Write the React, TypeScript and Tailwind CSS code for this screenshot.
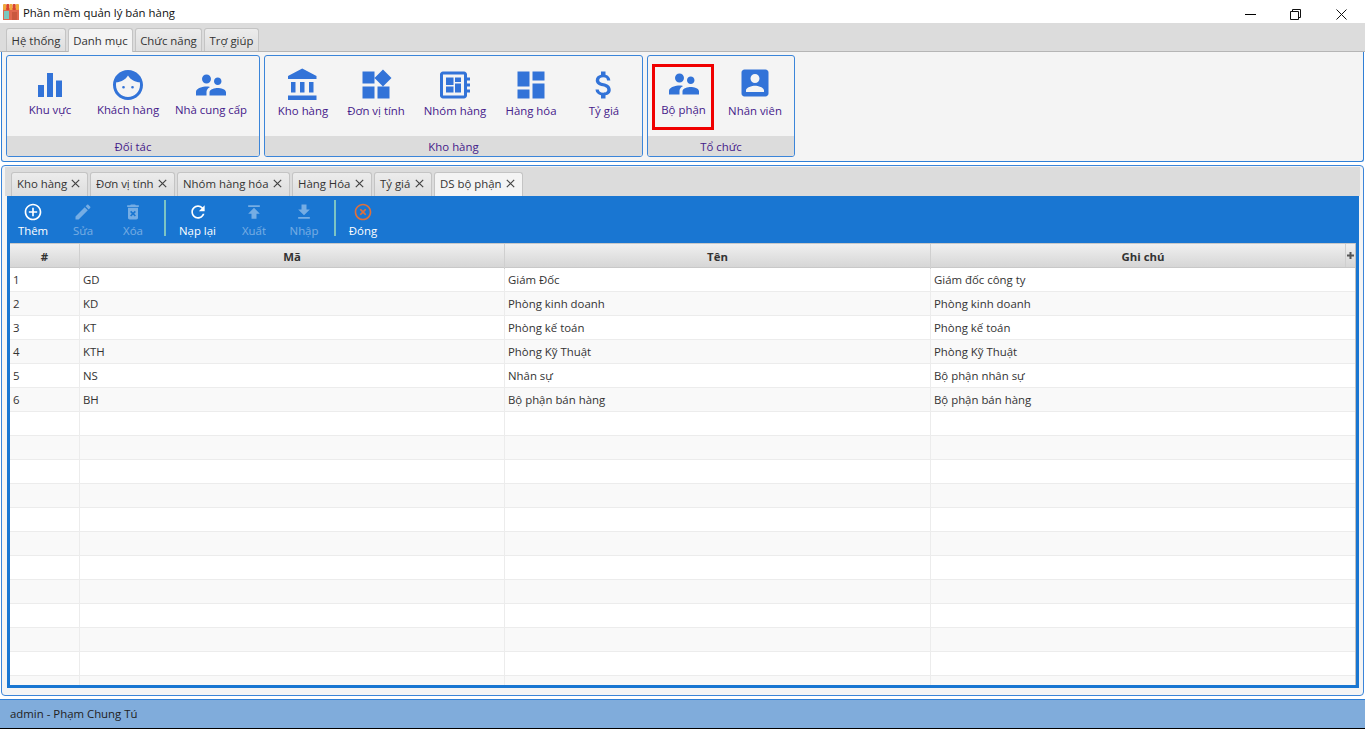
import React from "react";

const P = {
  bars: "M10 20h4V4h-4v16zm-6 0h4v-8H4v8zM16 9v11h4V9h-4z",
  people: "M16.5 12c1.38 0 2.49-1.12 2.49-2.5S17.88 7 16.5 7C15.12 7 14 8.12 14 9.5s1.12 2.5 2.5 2.5zM9 11c1.66 0 2.99-1.34 2.99-3S10.66 5 9 5C7.34 5 6 6.34 6 8s1.34 3 3 3zm7.5 3c-1.83 0-5.5.92-5.5 2.75V19h11v-2.25c0-1.83-3.67-2.75-5.5-2.75zM9 13c-2.33 0-7 1.17-7 3.5V19h7v-2.25c0-.85.33-2.34 2.37-3.47C10.5 13.1 9.66 13 9 13z",
  bank: "M4 10v7h3v-7H4zm6 0v7h3v-7h-3zM2 22h19v-3H2v3zm14-12v7h3v-7h-3zm-4.5-9L2 6v2h19V6l-9.5-5z",
  widgets: "M13 13v8h8v-8h-8zM3 21h8v-8H3v8zM3 3v8h8V3H3zm13.66-1.31L11 7.34 16.66 13l5.66-5.66-5.66-5.65z",
  board: "M22 9V7h-2V5c0-1.1-.9-2-2-2H4c-1.1 0-2 .9-2 2v14c0 1.1.9 2 2 2h14c1.1 0 2-.9 2-2v-2h2v-2h-2v-2h2v-2h-2V9h2zm-4 10H4V5h14v14zM6 13h5v4H6zm6-6h4v3h-4zM6 7h5v5H6zm6 4h4v6h-4z",
  dash: "M3 13h8V3H3v10zm0 8h8v-6H3v6zm10 0h8V11h-8v10zm0-18v6h8V3h-8z",
  money: "M11.8 10.9c-2.27-.59-3-1.2-3-2.15 0-1.09 1.01-1.85 2.7-1.85 1.78 0 2.44.85 2.5 2.1h2.21c-.07-1.72-1.12-3.3-3.21-3.81V3h-3v2.16c-1.94.42-3.5 1.68-3.5 3.61 0 2.31 1.91 3.46 4.7 4.13 2.5.6 3 1.48 3 2.41 0 .69-.49 1.79-2.7 1.79-2.06 0-2.87-.92-2.98-2.1h-2.2c.12 2.19 1.76 3.42 3.68 3.83V21h3v-2.15c1.95-.37 3.5-1.5 3.5-3.55 0-2.84-2.43-3.81-4.7-4.4z",
  box: "M3 5v14c0 1.1.89 2 2 2h14c1.1 0 2-.9 2-2V5c0-1.1-.9-2-2-2H5c-1.11 0-2 .9-2 2zm12 4c0 1.66-1.34 3-3 3s-3-1.34-3-3 1.34-3 3-3 3 1.34 3 3zm-9 8c0-2 4-3.1 6-3.1s6 1.1 6 3.1v1H6v-1z",
  add: "M13 7h-2v4H7v2h4v4h2v-4h4v-2h-4V7zm-1-5C6.48 2 2 6.48 2 12s4.48 10 10 10 10-4.48 10-10S17.52 2 12 2zm0 18c-4.41 0-8-3.59-8-8s3.59-8 8-8 8 3.59 8 8-3.59 8-8 8z",
  edit: "M3 17.25V21h3.75L17.81 9.94l-3.75-3.75L3 17.25zM20.71 7.04c.39-.39.39-1.02 0-1.41l-2.34-2.34c-.39-.39-1.02-.39-1.41 0l-1.83 1.83 3.75 3.75 1.83-1.83z",
  del: "M6 19c0 1.1.9 2 2 2h8c1.1 0 2-.9 2-2V7H6v12zm2.46-7.12l1.41-1.41L12 12.59l2.12-2.12 1.41 1.41L13.41 14l2.12 2.12-1.41 1.41L12 15.41l-2.12 2.12-1.41-1.41L10.59 14l-2.13-2.12zM15.5 4l-1-1h-5l-1 1H5v2h14V4z",
  refresh: "M17.65 6.35C16.2 4.9 14.21 4 12 4c-4.42 0-7.99 3.58-7.99 8s3.57 8 7.99 8c3.73 0 6.84-2.55 7.73-6h-2.08c-.82 2.33-3.04 4-5.65 4-3.31 0-6-2.69-6-6s2.69-6 6-6c1.66 0 3.14.69 4.22 1.78L13 11h7V4l-2.35 2.35z",
  up: "M5 4v2h14V4H5zm0 10h4v6h6v-6h4l-7-7-7 7z",
  down: "M19 9h-4V3H9v6H5l7 7 7-7zM5 18v2h14v-2H5z",
  off: "M14.59 8L12 10.59 9.41 8 8 9.41 10.59 12 8 14.59 9.41 16 12 13.41 14.59 16 16 14.59 13.41 12 16 9.41 14.59 8zM12 2C6.47 2 2 6.47 2 12s4.47 10 10 10 10-4.47 10-10S17.53 2 12 2zm0 18c-4.41 0-8-3.59-8-8s3.59-8 8-8 8 3.59 8 8-3.59 8-8 8z",
  face: "M12 2C6.48 2 2 6.48 2 12s4.48 10 10 10 10-4.48 10-10S17.52 2 12 2zm0 18c-4.41 0-8-3.59-8-8 0-.6.07-1.2.2-1.76C6.9 9.9 10.3 8.6 12 5.6c1.7 3 5.1 4.3 7.8 4.64.13.56.2 1.16.2 1.76 0 4.41-3.59 8-8 8zm-3-7.4a.9.9 0 100 1.800.9.9 0 000-1.800zm6 0a.9.9 0 100 1.800.9.9 0 000-1.800z",
};

function Ico({ d, size, cls }: { d: string; size: number; cls: string }) {
  return (
    <svg width={size} height={size} viewBox="0 0 24 24" className={cls} fill="currentColor">
      <path d={d} />
    </svg>
  );
}

function RibbonBtn({ d, label, w, lift }: { d: string; label: string; w: string; lift?: boolean }) {
  return (
    <div className={`${w} shrink-0 flex flex-col items-center`}>
      <Ico d={d} size={36} cls="text-[#3273d8] shrink-0" />
      <span className={`${lift ? "mt-0" : "-mt-[1px]"} text-[11.4px] leading-[16px] text-[#45208a] whitespace-nowrap`}>{label}</span>
    </div>
  );
}

function Group({ w, title, pt, children }: { w: string; title: string; pt: string; children: React.ReactNode }) {
  return (
    <div className={`${w} h-[102px] border border-[#3b85d9] rounded-[3px] flex flex-col overflow-hidden`}>
      <div className={`flex-1 flex ${pt} overflow-hidden`}>{children}</div>
      <div className="h-[20px] bg-[#dcdcdc] text-center text-[11.4px] leading-[21px] text-[#45208a]">{title}</div>
    </div>
  );
}

function TabX({ label, active, w }: { label: string; active?: boolean; w: string }) {
  return (
    <div className={`${w} h-[24px] mr-[2px] pb-[2px] flex items-center justify-between pl-[5px] pr-[7px] border border-b-0 border-[#c4c4c4] rounded-t-[3px] ${active ? "bg-[#f4f4f4]" : "bg-gradient-to-b from-[#ececec] to-[#dedede]"}`}>
      <span className="text-[11.4px] text-[#333] whitespace-nowrap">{label}</span>
      <svg width="9" height="9" viewBox="0 0 9 9" className="shrink-0" stroke="#444" strokeWidth="1.2"><path d="M.8.8l7.400 7.400M8.200.8L.8 8.200" /></svg>
    </div>
  );
}

function Tool({ d, label, w, off, color }: { d: string; label: string; w: string; off?: boolean; color?: string }) {
  return (
    <div className={`${w} shrink-0 flex flex-col items-center pt-[6px] ${off ? "opacity-40" : ""}`}>
      <Ico d={d} size={20} cls={color ?? "text-white"} />
      <span className="mt-[1px] text-[11.4px] leading-[16px] text-white whitespace-nowrap">{label}</span>
    </div>
  );
}

const rows = [
  ["1", "GD", "Giám Đốc", "Giám đốc công ty"],
  ["2", "KD", "Phòng kinh doanh", "Phòng kinh doanh"],
  ["3", "KT", "Phòng kế toán", "Phòng kế toán"],
  ["4", "KTH", "Phòng Kỹ Thuật", "Phòng Kỹ Thuật"],
  ["5", "NS", "Nhân sự", "Bộ phận nhân sự"],
  ["6", "BH", "Bộ phận bán hàng", "Bộ phận bán hàng"],
  ...Array.from({ length: 12 }, () => ["", "", "", ""]),
];

const grid = "grid grid-cols-[70px_425px_426px_1fr]";

export default function App() {
  return (
    <div className="w-screen h-screen overflow-hidden flex flex-col bg-white" style={{ fontFamily: '"Open Sans","Noto Sans",sans-serif' }}>
      {/* Title bar */}
      <div className="h-[23px] shrink-0 flex items-center bg-white">
        <svg width="20" height="20" viewBox="0 0 20 20" className="ml-[1px] shrink-0">
          <rect x="2" y="6" width="16" height="12" fill="#e0674f" />
          <rect x="3" y="9" width="5" height="8" fill="#7cc8c0" />
          <rect x="11" y="10" width="5" height="8" fill="#c9573f" />
          <rect x="2" y="2" width="3.200" height="6" rx="1" fill="#f0a83c" />
          <rect x="5.200" y="2" width="3.200" height="6" rx="1" fill="#d8432f" />
          <rect x="8.400" y="2" width="3.200" height="6" rx="1" fill="#f0a83c" />
          <rect x="11.600" y="2" width="3.200" height="6" rx="1" fill="#d8432f" />
          <rect x="14.800" y="2" width="3.200" height="6" rx="1" fill="#f0a83c" />
        </svg>
        <span className="ml-[2px] mt-[2px] text-[11.4px] text-[#111] whitespace-nowrap">Phần mềm quản lý bán hàng</span>
        <div className="ml-auto mt-[5px] flex items-center pr-[18px]">
          <div className="w-[11px] h-[1px] bg-black" />
          <svg width="11" height="11" viewBox="0 0 11 11" fill="none" stroke="#111" className="ml-[34px]"><path d="M.5 2.500h8v8h-8zM2.500 2.500v-2h8v8h-2" /></svg>
          <svg width="11" height="11" viewBox="0 0 11 11" stroke="#111" className="ml-[35px]"><path d="M.5.5l10 10M10.500.5l-10 10" /></svg>
        </div>
      </div>
      {/* Menu tabs */}
      <div className="h-[29px] shrink-0 bg-[#dcdcdc] flex items-end pl-[6px] gap-[2px] border-b border-[#b5b5b5]">
        {[["Hệ thống", "w-[60px]"], ["Danh mục", "w-[65px]"], ["Chức năng", "w-[67px]"], ["Trợ giúp", "w-[55px]"]].map(([t, w], i) => (
          <div key={t} className={`${w} text-center text-[11.4px] leading-[24px] text-[#333] border border-b-0 border-[#c4c4c4] rounded-t-[3px] ${i === 1 ? "h-[24px] -mb-[1px] bg-[#f4f4f4]" : "h-[23px] bg-gradient-to-b from-[#ececec] to-[#dedede]"}`}>{t}</div>
        ))}
      </div>
      {/* Ribbon */}
      <div className="h-[110px] shrink-0 mx-[1px] bg-[#f4f4f4] border-x border-b border-[#2f7fd6] rounded-b-[3px] flex gap-[4px] pl-[4px] pt-[3px]">
        <Group w="w-[254px]" title="Đối tác" pt="pt-[11px]">
          <RibbonBtn d={P.bars} label="Khu vực" w="w-[86px]" />
          <RibbonBtn d={P.face} label="Khách hàng" w="w-[70px]" />
          <RibbonBtn d={P.people} label="Nhà cung cấp" w="w-[96px]" />
        </Group>
        <Group w="w-[379px]" title="Kho hàng" pt="pt-[11px]">
          <RibbonBtn d={P.bank} label="Kho hàng" w="w-[76px]" lift />
          <RibbonBtn d={P.widgets} label="Đơn vị tính" w="w-[70px]" lift />
          <RibbonBtn d={P.board} label="Nhóm hàng" w="w-[88px]" lift />
          <RibbonBtn d={P.dash} label="Hàng hóa" w="w-[64px]" lift />
          <RibbonBtn d={P.money} label="Tỷ giá" w="w-[82px]" lift />
        </Group>
        <Group w="w-[148px]" title="Tổ chức" pt="pt-[8px] pl-[4px]">
          <div className="w-[62px] h-[66px] shrink-0 border-[3px] border-[#f00000] flex flex-col items-center">
            <Ico d={P.people} size={36} cls="text-[#3273d8] shrink-0 -mt-[1px] ml-[1px]" />
            <span className="ml-[1px] text-[11.4px] leading-[16px] text-[#45208a] whitespace-nowrap">Bộ phận</span>
          </div>
          <div className="w-[82px] shrink-0 flex flex-col items-center pt-[1px]">
            <Ico d={P.box} size={36} cls="text-[#3273d8] shrink-0" />
            <span className="mt-[2px] text-[11.4px] leading-[16px] text-[#45208a] whitespace-nowrap">Nhân viên</span>
          </div>
        </Group>
      </div>
      {/* Main panel */}
      <div className="h-[537px] shrink-0 px-[1px] pt-[3px] bg-white">
        <div className="h-[531px] border border-[#3b85d9] rounded-[4px] bg-[#f4f4f4] flex flex-col overflow-hidden">
          <div className="h-[29px] mt-[1px] mx-[3px] shrink-0 bg-[#dcdcdc] flex items-end pl-[6px]">
            <TabX label="Kho hàng" w="w-[77px]" />
            <TabX label="Đơn vị tính" w="w-[85px]" />
            <TabX label="Nhóm hàng hóa" w="w-[113px]" />
            <TabX label="Hàng Hóa" w="w-[80px]" />
            <TabX label="Tỷ giá" w="w-[58px]" />
            <TabX label="DS bộ phận" w="w-[89px]" active />
          </div>
          <div className="ml-[5px] mr-[4px] flex-1 mb-[7px] border-x-[3px] border-b-[3px] border-[#1976d2] flex flex-col overflow-hidden">
            <div className="h-[47px] shrink-0 bg-[#1976d2] flex">
              <Tool d={P.add} label="Thêm" w="w-[46px]" />
              <Tool d={P.edit} label="Sửa" w="w-[54px]" off />
              <Tool d={P.del} label="Xóa" w="w-[46px]" off />
              <div className="w-[2px] h-[36px] mt-[4px] ml-[8px] bg-[#7cc4c4] shrink-0" />
              <Tool d={P.refresh} label="Nạp lại" w="w-[63px]" />
              <Tool d={P.up} label="Xuất" w="w-[50px]" off />
              <Tool d={P.down} label="Nhập" w="w-[50px]" off />
              <div className="w-[2px] h-[36px] mt-[4px] ml-[5px] bg-[#7cc4c4] shrink-0" />
              <Tool d={P.off} label="Đóng" w="w-[54px]" color="text-[#e0703a]" />
            </div>
            <div className="flex-1 bg-white border-r border-[#c0c0c0] overflow-hidden">
              <div className={`${grid} h-[25px] border-t border-b border-[#c8c8c8] bg-gradient-to-b from-[#f0f0f0] to-[#d6d6d6] text-[11.4px] font-bold text-[#333] text-center leading-[25px] relative`}>
                <div className="border-r border-[#cfcfcf]">#</div>
                <div className="border-r border-[#cfcfcf]">Mã</div>
                <div className="border-r border-[#cfcfcf]">Tên</div>
                <div>Ghi chú</div>
                <div className="absolute right-0 top-0 h-full w-[10px] border-l border-[#cfcfcf] flex items-center justify-center">
                  <svg width="7" height="7" viewBox="0 0 7 7" fill="#555"><path d="M2.500 0h2v2.500H7v2H4.500V7h-2V4.500H0v-2h2.500z" /></svg>
                </div>
              </div>
              {rows.map((r, i) => (
                <div key={i} className={`${grid} h-[24px] border-b border-[#ececec] text-[11.4px] leading-[23px] text-[#333] ${i % 2 ? "bg-[#f9f9f9]" : "bg-white"}`}>
                  {r.map((c, j) => (
                    <div key={j} className={`pl-[3px] ${j < 3 ? "border-r border-[#ececec]" : ""}`}>{c}</div>
                  ))}
                </div>
              ))}
            </div>
          </div>
        </div>
      </div>
      {/* Status bar */}
      <div className="h-[30px] shrink-0 bg-[#80acdb] border-t border-[#2f7fd6] border-b border-b-black flex items-center pl-[10px] text-[11.4px] text-[#222]">admin - Phạm Chung Tú</div>
    </div>
  );
}
